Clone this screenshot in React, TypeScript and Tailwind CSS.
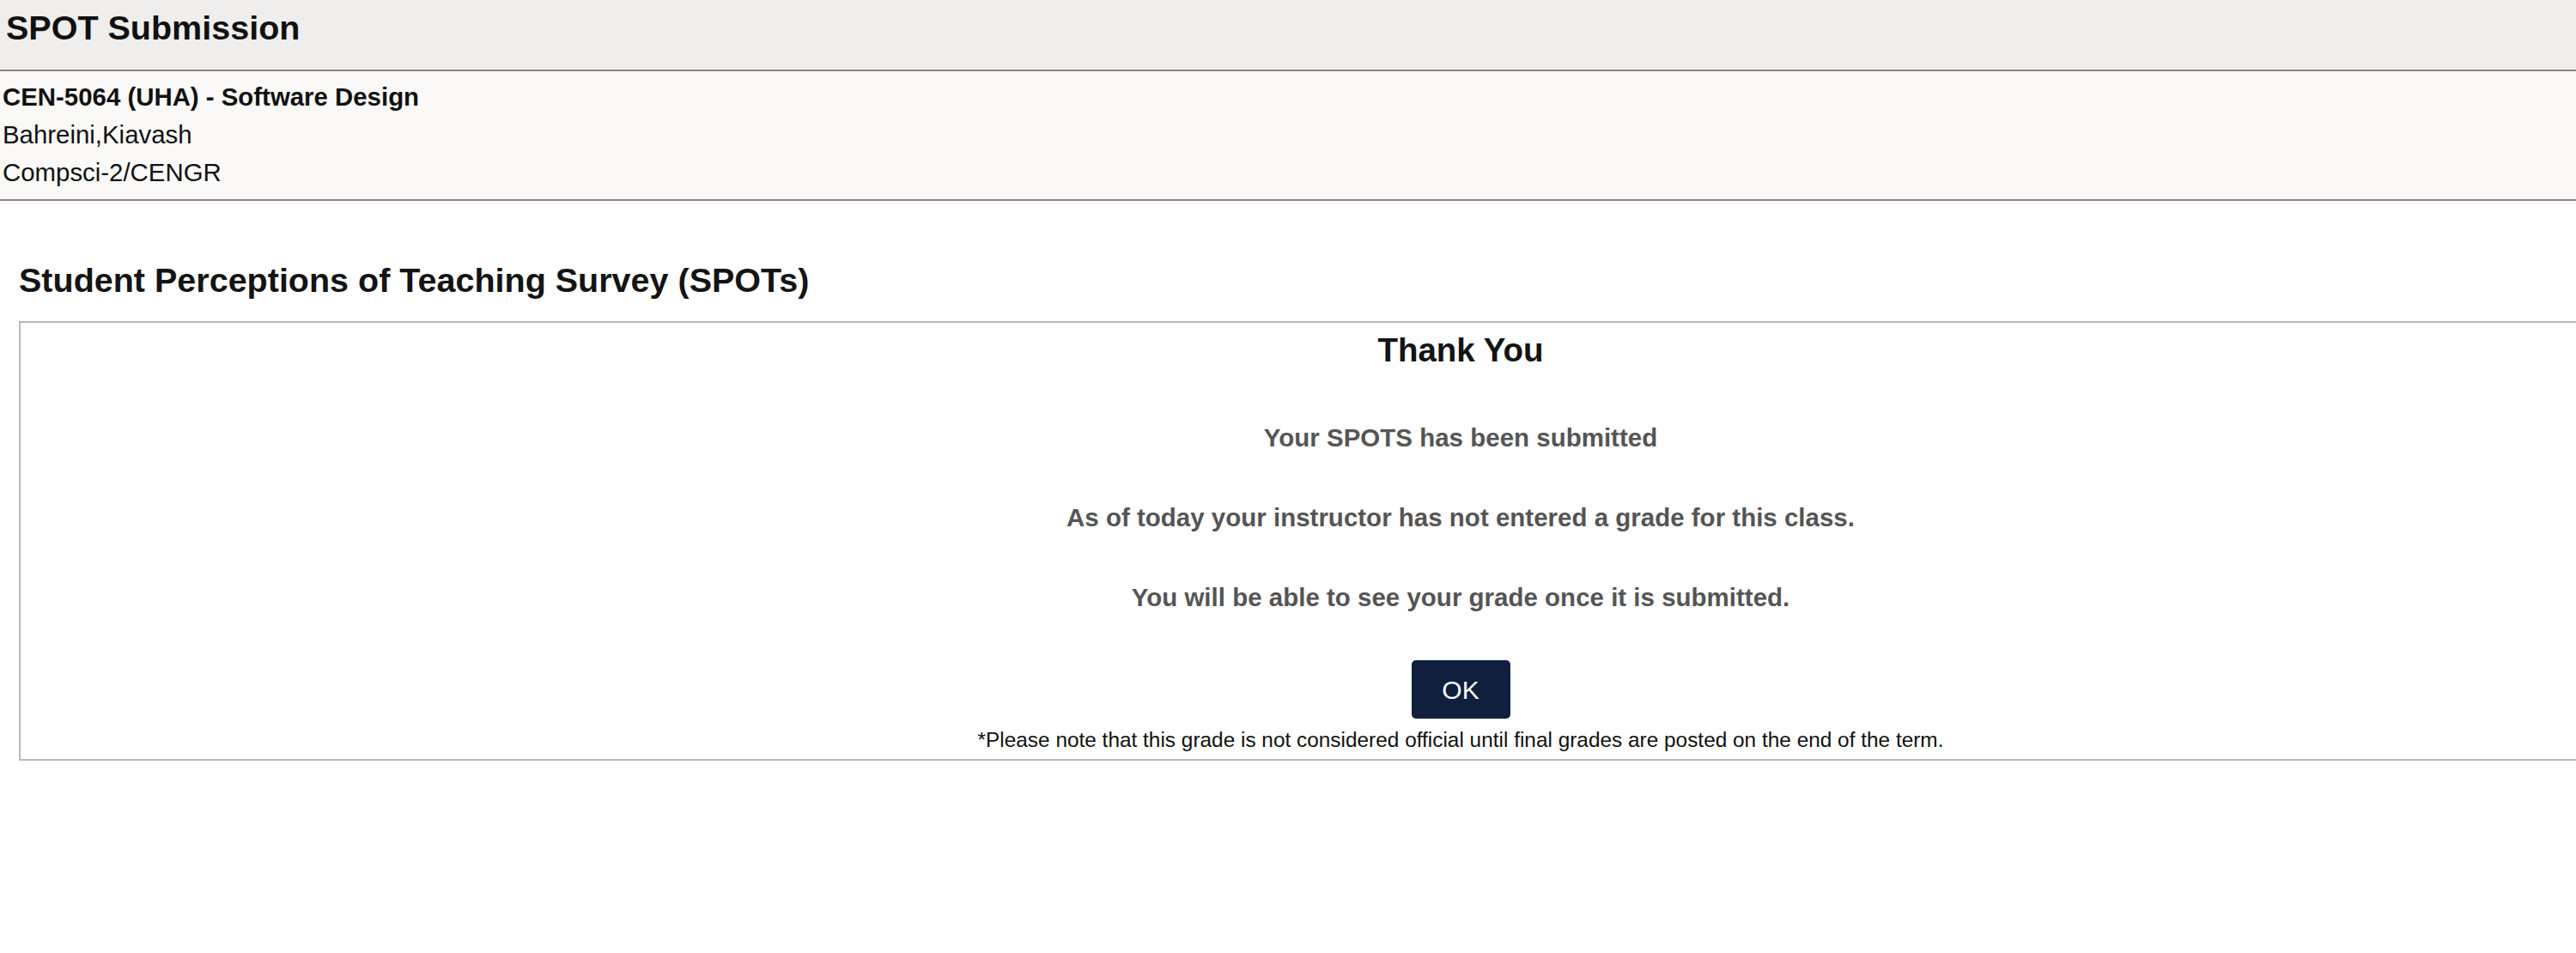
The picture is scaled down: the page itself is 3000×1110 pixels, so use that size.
export default function App() {
  return (
    <div className="w-full min-h-[1110px] overflow-hidden bg-white font-['Liberation_Sans',Arial,sans-serif] text-[#111]">
      {/* page header */}
      <div className="h-[83px] bg-[#efeeec] border-b-2 border-[#8a8682] pl-[7px] pt-[9px]">
        <h1 className="text-[39.5px] leading-[46px] font-bold">SPOT Submission</h1>
      </div>

      {/* class info */}
      <div className="bg-[#faf9f7] border-b-2 border-[#8a8682] pl-[3px] pt-[8px] pb-[9px] text-[29.4px] leading-[44px]">
        <div className="font-bold">CEN-5064 (UHA) - Software Design</div>
        <div>Bahreini,Kiavash</div>
        <div>Compsci-2/CENGR</div>
      </div>

      <div className="pl-[22px] pt-[69px]">
        <h2 className="text-[39.5px] leading-[46px] font-bold text-[#141414]">
          Student Perceptions of Teaching Survey (SPOTs)
        </h2>

        <div className="mt-[25px] w-[3358px] shrink-0 border-2 border-[#bbb7b3] flex flex-col items-center pt-[10px] pb-[8px]">
          <div className="text-[38.5px] leading-[44px] font-bold text-[#141414]">Thank You</div>
          <p className="mt-[63px] text-[29.5px] leading-[34px] font-bold text-[#555555]">
            Your SPOTS has been submitted
          </p>
          <p className="mt-[59px] text-[29.5px] leading-[34px] font-bold text-[#555555]">
            As of today your instructor has not entered a grade for this class.
          </p>
          <p className="mt-[59px] text-[29.5px] leading-[34px] font-bold text-[#555555]">
            You will be able to see your grade once it is submitted.
          </p>
          <button className="mt-[56px] w-[115px] h-[68px] rounded-[5px] bg-[#0f1f3d] text-white text-[30px]">
            OK
          </button>
          <p className="mt-[11px] text-[24.4px] leading-[28px] text-[#111]">
            *Please note that this grade is not considered official until final grades are posted on the end of the term.
          </p>
        </div>
      </div>
    </div>
  )
}
